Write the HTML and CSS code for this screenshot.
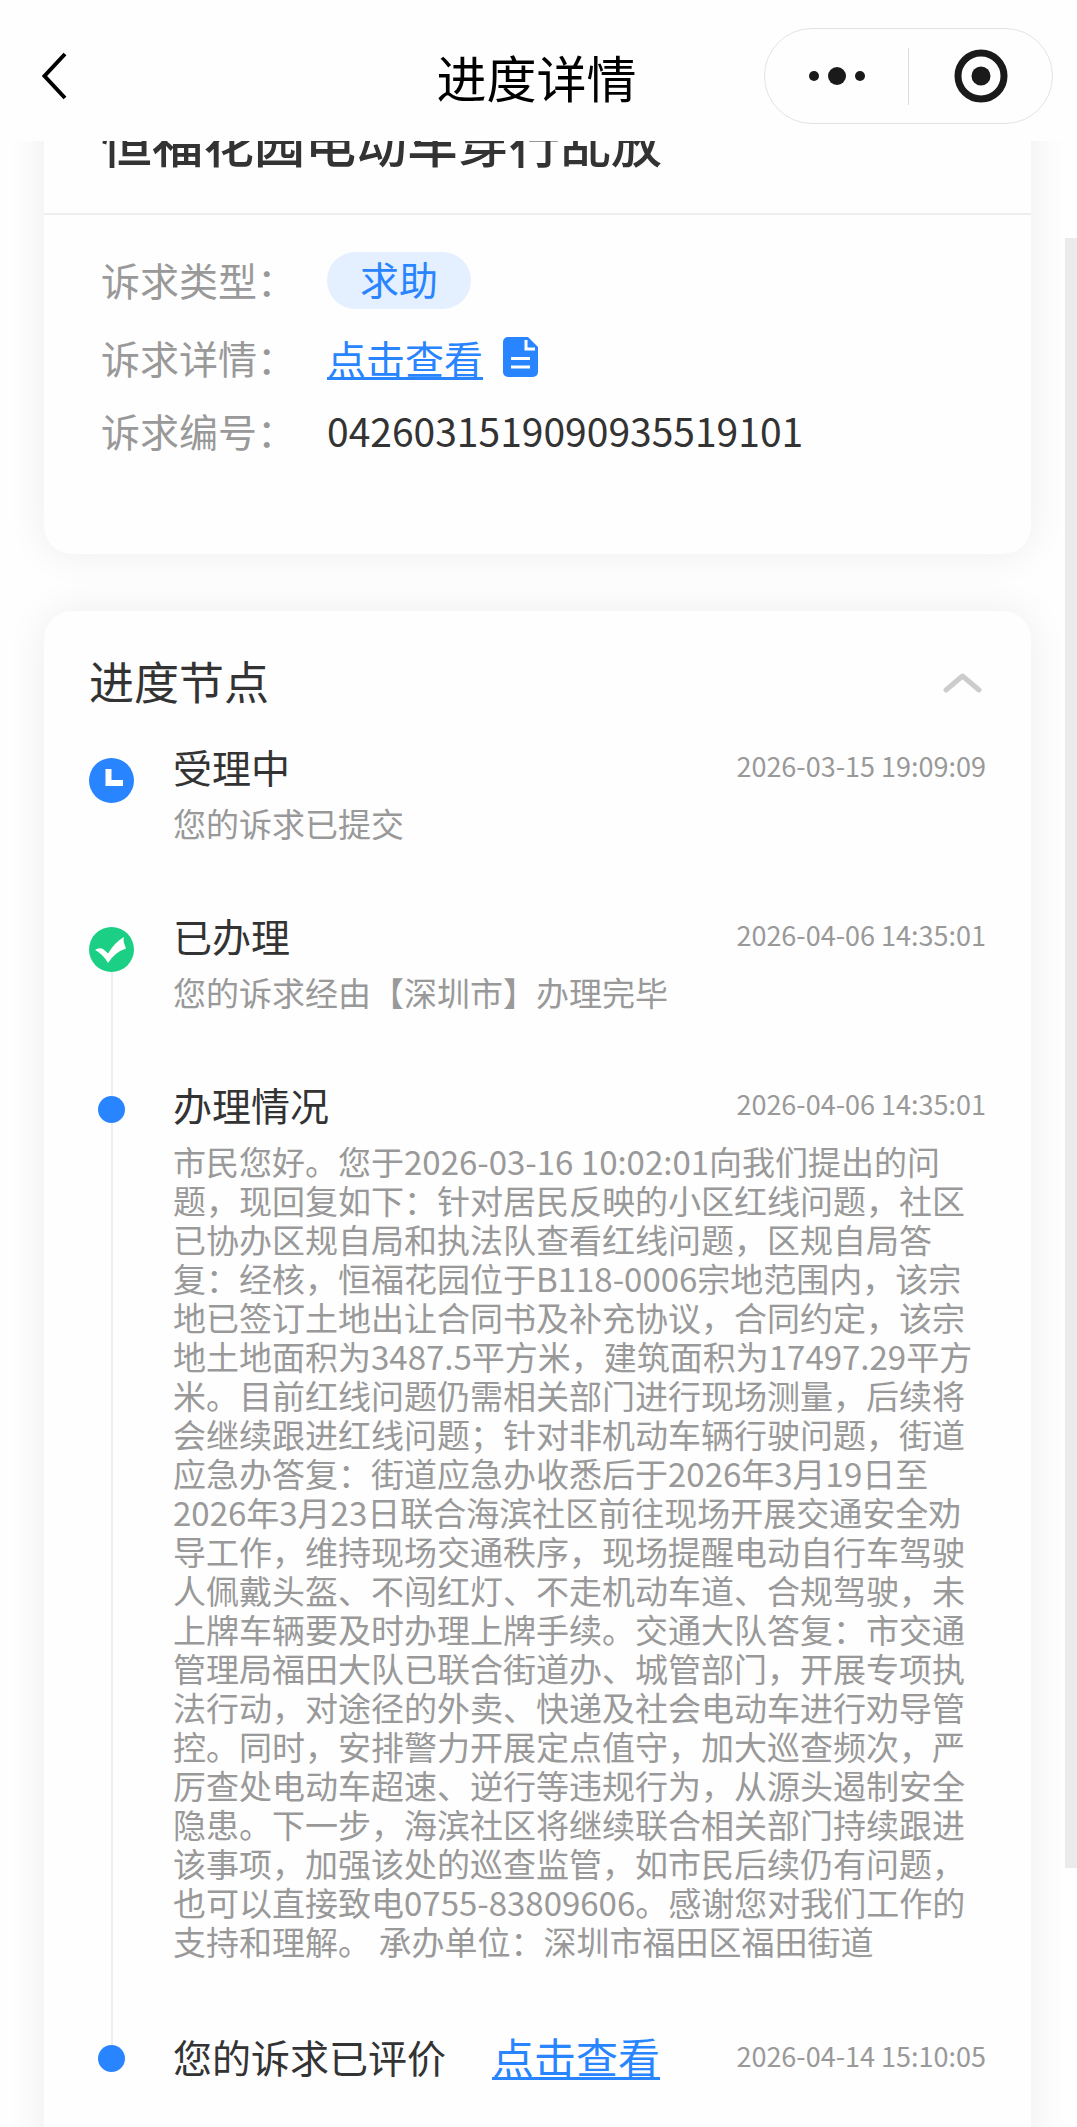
FILE: index.html
```html
<!DOCTYPE html>
<html lang="zh-CN">
<head>
<meta charset="utf-8">
<meta name="viewport" content="width=device-width, initial-scale=1">
<title>进度详情</title>
<link rel="stylesheet" href="styles.css">
</head>
<body>
<div class="app">
  <header class="navbar">
    <button class="nav-back" type="button" aria-label="返回">
      <svg width="28" height="48" viewBox="0 0 28 48" fill="none" stroke="#000" stroke-width="4"><path d="M25 2 4.500 24 25 46"/></svg>
    </button>
    <h1 class="nav-title">进度详情</h1>
    <div class="capsule">
      <button class="capsule-btn" type="button" aria-label="更多">
        <svg width="56" height="18" viewBox="0 0 56 18" fill="#1a1a1a"><circle cx="5" cy="9" r="5"/><circle cx="28" cy="9" r="9"/><circle cx="51" cy="9" r="5"/></svg>
      </button>
      <span class="capsule-line"></span>
      <button class="capsule-btn" type="button" aria-label="关闭">
        <svg width="54" height="54" viewBox="0 0 54 54"><circle cx="27" cy="27" r="23" fill="none" stroke="#1a1a1a" stroke-width="7"/><circle cx="27" cy="27" r="9.500" fill="#1a1a1a"/></svg>
      </button>
    </div>
  </header>

  <main class="content">
    <section class="card card-info">
      <h2 class="info-title">恒福花园电动车穿行乱放</h2>
      <dl class="info-list">
        <div class="info-row info-row-tag"><dt>诉求类型：</dt><dd><span class="tag">求助</span></dd></div>
        <div class="info-row"><dt>诉求详情：</dt><dd><a class="link" href="#detail">点击查看</a>
          <svg class="doc-icon" width="35" height="40" viewBox="0 0 35 40"><path fill="#2884ff" d="M5 0H25L35 10V35a5 5 0 0 1-5 5H5a5 5 0 0 1-5-5V5a5 5 0 0 1 5-5Z"/><path fill="none" stroke="#fff" stroke-width="3" d="M23 3v9h9M8 21.500h19M8 30h19"/></svg></dd></div>
        <div class="info-row"><dt>诉求编号：</dt><dd>0426031519090935519101</dd></div>
      </dl>
    </section>

    <section class="card card-progress">
      <div class="progress-head">
        <h2 class="progress-title">进度节点</h2>
        <button class="collapse" type="button" aria-label="收起">
          <svg width="40" height="22" viewBox="0 0 40 22" fill="none" stroke="#ccc" stroke-width="5" stroke-linecap="round" stroke-linejoin="round"><path d="M3 18 19.500 4 36 18"/></svg>
        </button>
      </div>

      <ol class="timeline">
        <li class="node">
          <div class="rail">
            <svg class="node-icon" width="45" height="45" viewBox="0 0 45 45"><circle cx="22.500" cy="22.500" r="22.500" fill="#2884ff"/><path d="M19.500 11v14H34" fill="none" stroke="#fff" stroke-width="6"/></svg>
          </div>
          <div class="node-main">
            <div class="node-head"><h3>受理中</h3><time>2026-03-15 19:09:09</time></div>
            <p>您的诉求已提交</p>
          </div>
        </li>
        <li class="node">
          <div class="rail rail-down">
            <svg class="node-icon" width="45" height="45" viewBox="0 0 45 45"><circle cx="22.500" cy="22.500" r="22.500" fill="#1bd085"/><path d="M6 23Q10 20 14 22l5 4.500Q26 15 35 10q-1 3 0 6t2 5.500Q26 25 19 36 14 27 6 23Z" fill="#fff"/></svg>
          </div>
          <div class="node-main">
            <div class="node-head"><h3>已办理</h3><time>2026-04-06 14:35:01</time></div>
            <p>您的诉求经由【深圳市】办理完毕</p>
          </div>
        </li>
        <li class="node">
          <div class="rail rail-up rail-down"><span class="dot"></span></div>
          <div class="node-main">
            <div class="node-head"><h3>办理情况</h3><time>2026-04-06 14:35:01</time></div>
            <p>市民您好。您于2026-03-16 10:02:01向我们提出的问题，现回复如下：针对居民反映的小区红线问题，社区已协办区规自局和执法队查看红线问题，区规自局答复：经核，恒福花园位于B118-0006宗地范围内，该宗地已签订土地出让合同书及补充协议，合同约定，该宗地土地面积为3487.5平方米，建筑面积为17497.29平方米。目前红线问题仍需相关部门进行现场测量，后续将会继续跟进红线问题；针对非机动车辆行驶问题，街道应急办答复：街道应急办收悉后于2026年3月19日至2026年3月23日联合海滨社区前往现场开展交通安全劝导工作，维持现场交通秩序，现场提醒电动自行车驾驶人佩戴头盔、不闯红灯、不走机动车道、合规驾驶，未上牌车辆要及时办理上牌手续。交通大队答复：市交通管理局福田大队已联合街道办、城管部门，开展专项执法行动，对途径的外卖、快递及社会电动车进行劝导管控。同时，安排警力开展定点值守，加大巡查频次，严厉查处电动车超速、逆行等违规行为，从源头遏制安全隐患。下一步，海滨社区将继续联合相关部门持续跟进该事项，加强该处的巡查监管，如市民后续仍有问题，也可以直接致电0755-83809606。感谢您对我们工作的支持和理解。 承办单位：深圳市福田区福田街道</p>
          </div>
        </li>
        <li class="node">
          <div class="rail rail-up"><span class="dot"></span></div>
          <div class="node-main">
            <div class="node-head"><h3>您的诉求已评价</h3><a class="link link-large" href="#rating">点击查看</a><time>2026-04-14 15:10:05</time></div>
          </div>
        </li>
      </ol>
    </section>
  </main>
  <div class="scroll-thumb"></div>
</div>
</body>
</html>
```
FILE: styles.css
```css
* {
  box-sizing: border-box;
}

body,
h1,
h2,
h3,
p,
dl,
dd,
ol {
  margin: 0;
  padding: 0;
  font-weight: 400;
}

body {
  background: #fefefe;
  color: #333;
  font-family: "Noto Sans CJK SC", "Noto Sans", sans-serif;
}

button {
  display: flex;
  align-items: center;
  justify-content: center;
  padding: 0;
  border: 0;
  background: none;
}

.app {
  position: relative;
  display: flex;
  flex-direction: column;
  height: 100vh;
  overflow: hidden;
}

/* Navigation bar */
.navbar {
  display: grid;
  grid-template-columns: 1fr auto 1fr;
  align-items: center;
  flex: none;
  padding: 28px 24px 17px 40px;
}

.nav-back {
  justify-self: start;
}

.nav-title {
  color: #000;
  font-size: 50px;
  line-height: 60px;
  margin-right: 20px;
}

.capsule {
  justify-self: end;
  display: flex;
  align-items: center;
  width: 289px;
  height: 96px;
  border: 1px solid #e3e3e3;
  border-radius: 48px;
}

.capsule-btn {
  flex: 1;
  height: 100%;
}

.capsule-line {
  width: 1px;
  height: 57px;
  background: #ddd;
}

/* Cards */
.content {
  flex: 1;
  min-height: 0;
  overflow: hidden;
  padding: 0 46px 0 44px;
}

.card {
  background: #fefefe;
  border-radius: 28px;
  box-shadow: 0 0 40px rgba(0, 0, 0, 0.07);
}

/* The list rests scrolled part of the way under the bar */
.card-info {
  margin-top: -61px;
}

.info-title {
  padding: 31px 57px 42px;
  border-bottom: 2px solid #eee;
  font-size: 51px;
  font-weight: 500;
  line-height: 60px;
}

.info-list {
  display: grid;
  gap: 27px;
  padding: 37px 57px 99px;
  font-size: 39px;
  line-height: 42px;
}

.info-row {
  display: flex;
  align-items: center;
}

.info-row dt {
  width: 226px;
  flex: none;
  padding-bottom: 4px;
  color: #999;
}

.info-row dd {
  display: flex;
  align-items: center;
  gap: 20px;
  padding-bottom: 4px;
}

.info-row-tag dd {
  padding-bottom: 0;
}

.tag {
  padding: 0 33px 4px;
  border-radius: 29px;
  background: #e4efff;
  color: #2884ff;
  line-height: 53px;
}

.link {
  color: #2884ff;
  text-decoration: underline;
  text-decoration-thickness: 3px;
  text-underline-offset: 3px;
}

.card-progress {
  margin-top: 57px;
  padding: 46px 45px;
}

.progress-head {
  display: flex;
  align-items: center;
  justify-content: space-between;
}

.progress-title {
  font-size: 45px;
  line-height: 48px;
}

.collapse {
  padding: 4px 3px 0 0;
}

/* Timeline */
.timeline {
  margin-top: 41px;
  list-style: none;
}

.node {
  display: flex;
  gap: 39px;
}

.rail {
  display: flex;
  flex-direction: column;
  align-items: center;
  flex: none;
  width: 45px;
}

.rail::before {
  content: "";
  width: 2px;
  height: 12px;
}

.rail::after {
  content: "";
  width: 2px;
  flex: 1;
}

.rail-up::before,
.rail-down::after {
  background: #eee;
}

.node-icon {
  display: block;
  flex: none;
}

.dot {
  width: 27px;
  height: 27px;
  flex: none;
  border-radius: 50%;
  background: #2884ff;
}

.node-main {
  flex: 1;
  min-width: 0;
  padding-bottom: 72px;
}

.node-head {
  display: flex;
  align-items: center;
}

.node-head h3 {
  font-size: 39px;
  line-height: 40px;
}

.node-head time {
  margin-left: auto;
  color: #999;
  font-size: 27px;
  line-height: 40px;
}

.link-large {
  margin-left: 46px;
  font-size: 42px;
  line-height: 46px;
}

.node-main p {
  margin-top: 18px;
  color: #999;
  font-size: 33px;
  line-height: 39px;
}

/* Scroll position marker, laid over the page edge */
.scroll-thumb {
  position: absolute;
  top: 238px;
  right: 0;
  width: 12px;
  height: 1630px;
  background: #ebebeb;
}
```
